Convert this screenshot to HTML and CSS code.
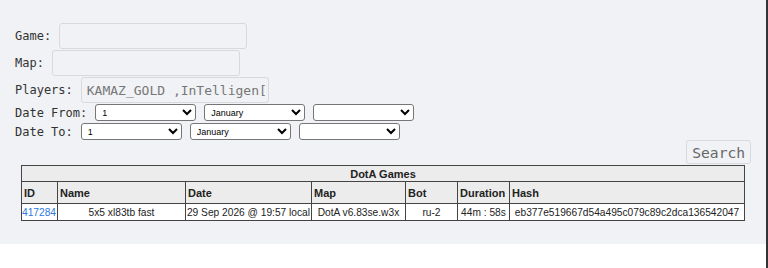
FILE: index.html
```html
<!DOCTYPE html>
<html lang="en">
<head>
    <meta charset="UTF-8">
    <title>DotA Games</title>
    <link rel="stylesheet" href="styles.css">
</head>
<body>
    <div class="page">
        <form class="search-form">
            <div class="row">
                <label>Game:</label>
                <input type="text" class="text-input">
            </div>
            <div class="row">
                <label>Map:</label>
                <input type="text" class="text-input">
            </div>
            <div class="row">
                <label>Players:</label>
                <input type="text" class="text-input" value="KAMAZ_GOLD ,InTelligen[TSU]">
            </div>
            <div class="row date-row">
                <label>Date From:</label>
                <select><option>1</option></select>
                <select><option>January</option></select>
                <select><option></option></select>
            </div>
            <div class="row date-row">
                <label>Date To:</label>
                <select><option>1</option></select>
                <select><option>January</option></select>
                <select><option></option></select>
            </div>
            <div class="actions">
                <button type="button" class="search-btn">Search</button>
            </div>
        </form>

        <table class="games">
            <colgroup>
                <col class="c-id">
                <col class="c-name">
                <col class="c-date">
                <col class="c-map">
                <col class="c-bot">
                <col class="c-dur">
                <col class="c-hash">
            </colgroup>
            <tr class="title-row">
                <th colspan="7">DotA Games</th>
            </tr>
            <tr class="head-row">
                <th>ID</th>
                <th>Name</th>
                <th>Date</th>
                <th>Map</th>
                <th>Bot</th>
                <th>Duration</th>
                <th>Hash</th>
            </tr>
            <tr class="data-row">
                <td class="left"><a href="#">417284</a></td>
                <td>5x5 xl83tb fast</td>
                <td>29 Sep 2026 @ 19:57 local</td>
                <td>DotA v6.83se.w3x</td>
                <td>ru-2</td>
                <td>44m : 58s</td>
                <td>eb377e519667d54a495c079c89c2dca136542047</td>
            </tr>
        </table>
    </div>
</body>
</html>
```

FILE: styles.css
```css
html, body {
    margin: 0;
    padding: 0;
}

body {
    background: white;
    min-height: 100vh;
    border-right: 2px solid #333;
    box-sizing: border-box;
    font-family: "DejaVu Sans Mono", monospace;
}

.page {
    background-color: #f0f2f5;
    padding: 23px 15px 23px 15px;
}

.row {
    display: flex;
    align-items: center;
    gap: 8px;
    margin-bottom: 1px;
    color: #333;
    font-size: 12px;
}

.text-input {
    width: 188px;
    height: 26px;
    box-sizing: border-box;
    padding: 0 1px 0 5px;
    border: 1px solid #d8d9dc;
    border-radius: 3px;
    background: #f0f2f5;
    color: #777;
    font-family: "DejaVu Sans Mono", monospace;
    font-size: 13px;
    outline: none;
}

.date-row {
    margin-bottom: 2px;
}

select {
    width: 101px;
    height: 17px;
    box-sizing: border-box;
    font-family: "Liberation Sans", Arial, sans-serif;
    font-size: 9px;
    background: white;
    border: 1px solid #767676;
    border-radius: 3px;
    padding: 0 2px;
}

.actions {
    display: flex;
    justify-content: flex-end;
    margin-top: -2px;
}

.search-btn {
    height: 24px;
    padding: 0 5px;
    background: #f0f2f5;
    border: 1px solid #d8d9dc;
    border-radius: 3px;
    color: #666;
    font-family: "DejaVu Sans Mono", monospace;
    font-size: 14.6px;
}

.games {
    width: 723px;
    table-layout: fixed;
    margin: 1px auto 0;
    border-collapse: collapse;
    border: 1px solid #444;
    font-family: "Liberation Sans", Arial, sans-serif;
    font-size: 11px;
    color: #222;
}

.games th,
.games td {
    border: 1px solid #444;
    padding: 0 2px;
    white-space: nowrap;
    overflow: hidden;
}

.title-row th {
    background: #ececec;
    height: 15px;
    text-align: center;
}

.head-row th {
    background: #ececec;
    height: 21px;
    text-align: left;
}

.data-row td {
    background: white;
    height: 16px;
    text-align: center;
    padding: 0;
    font-size: 10.2px;
}

.data-row td.left {
    text-align: left;
}

.data-row a {
    color: #2a7ae2;
    text-decoration: none;
}

.c-id { width: 36px; }
.c-name { width: 128px; }
.c-date { width: 126px; }
.c-map { width: 94px; }
.c-bot { width: 52px; }
.c-dur { width: 52px; }
.c-hash { width: 235px; }
```
